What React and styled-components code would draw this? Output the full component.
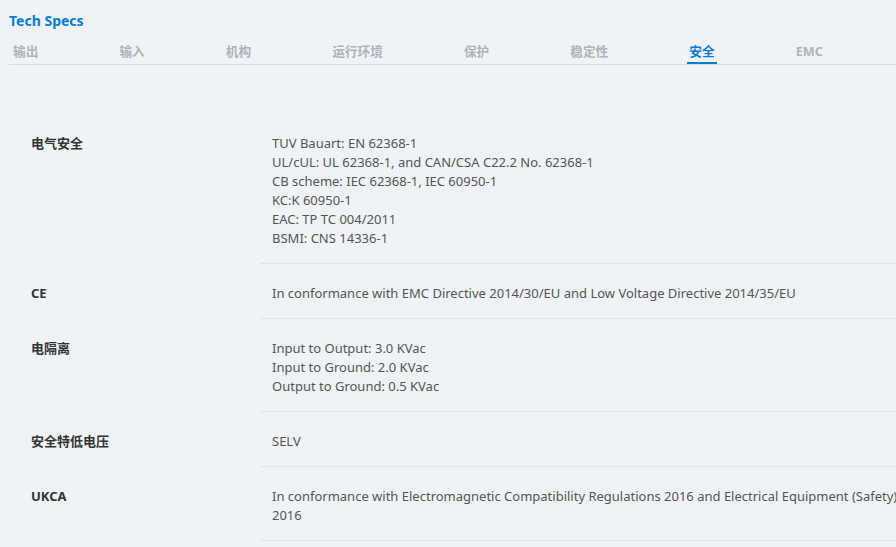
import styled, { createGlobalStyle } from "styled-components";

const GlobalStyle = createGlobalStyle`
  html, body {
    margin: 0;
    padding: 0;
    background: #eff3f8;
    overflow: hidden;
  }
  body {
    font-family: "Noto Sans", "Noto Sans CJK SC", sans-serif;
  }
`;

const tabs = ["输出", "输入", "机构", "运行环境", "保护", "稳定性", "安全", "EMC"];

const specs = [
  {
    label: "电气安全",
    lines: [
      "TUV Bauart: EN 62368-1",
      "UL/cUL: UL 62368-1, and CAN/CSA C22.2 No. 62368-1",
      "CB scheme: IEC 62368-1, IEC 60950-1",
      "KC:K 60950-1",
      "EAC: TP TC 004/2011",
      "BSMI: CNS 14336-1",
    ],
  },
  {
    label: "CE",
    lines: [
      "In conformance with EMC Directive 2014/30/EU and Low Voltage Directive 2014/35/EU",
    ],
  },
  {
    label: "电隔离",
    lines: [
      "Input to Output: 3.0 KVac",
      "Input to Ground: 2.0 KVac",
      "Output to Ground: 0.5 KVac",
    ],
  },
  { label: "安全特低电压", lines: ["SELV"] },
  {
    label: "UKCA",
    lines: [
      "In conformance with Electromagnetic Compatibility Regulations 2016 and Electrical Equipment (Safety) 2016",
    ],
  },
];

const App = () => {
  return (
    <Page>
      <GlobalStyle />
      <Title>Tech Specs</Title>
      <TabBar>
        {tabs.map((t) => (
          <Tab key={t} $active={t === "安全"}>
            {t}
          </Tab>
        ))}
      </TabBar>
      <Table>
        {specs.map((s) => (
          <Row key={s.label}>
            <Label>{s.label}</Label>
            <Value>
              {s.lines.map((l) => (
                <div key={l}>{l}</div>
              ))}
            </Value>
          </Row>
        ))}
      </Table>
    </Page>
  );
};

export default App;

// Styles
const Page = styled.div`
  width: 910px;
  padding: 12px 0 0 9px;
`;

const Title = styled.h2`
  margin: 0;
  font-size: 14px;
  font-weight: 700;
  line-height: 18px;
  color: #0a7bd6;
`;

const TabBar = styled.div`
  display: flex;
  margin-top: 13px;
  padding-left: 4px;
  border-bottom: 1px solid #d6dce3;
  width: 887px;
  overflow: hidden;
`;

const Tab = styled.div`
  position: relative;
  flex-shrink: 0;
  white-space: nowrap;
  margin-right: 81px;
  font-size: 12.7px;
  font-weight: 700;
  line-height: 17px;
  padding-bottom: 4px;
  color: ${(p) => (p.$active ? "#0a7bd6" : "#b0b3b7")};

  &::after {
    content: "";
    display: ${(p) => (p.$active ? "block" : "none")};
    position: absolute;
    left: -2px;
    right: -2px;
    bottom: 0;
    height: 2px;
    background: #0a7bd6;
  }
`;

const Table = styled.div`
  margin-top: 49px;
  display: flex;
  flex-direction: column;
`;

const Row = styled.div`
  display: grid;
  grid-template-columns: 251px 1fr;
`;

const Label = styled.div`
  padding: 20px 0 15px 22px;
  font-size: 13px;
  font-weight: 700;
  line-height: 19px;
  color: #333;
`;

const Value = styled.div`
  padding: 20px 0 15px 12px;
  font-size: 13px;
  line-height: 19px;
  color: #555;
  border-bottom: 1px solid #dde5f0;
`;
